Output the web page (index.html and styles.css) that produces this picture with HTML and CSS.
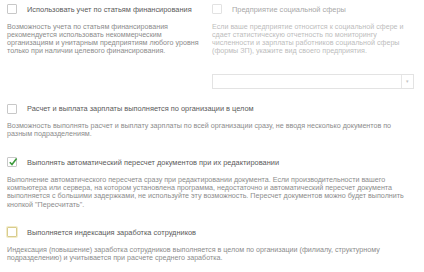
FILE: index.html
```html
<!DOCTYPE html>
<html lang="ru">
<head>
    <meta charset="UTF-8">
    <title>Настройки расчета зарплаты</title>
    <link rel="stylesheet" href="styles.css">
</head>
<body>
    <div class="page">
        <div class="columns">
            <div class="option">
                <label class="check-row">
                    <span class="box"></span>
                    <span class="label">Использовать учет по статьям финансирования</span>
                </label>
                <p class="desc">Возможность учета по статьям финансирования рекомендуется использовать некоммерческим организациям и унитарным предприятиям любого уровня только при наличии целевого финансирования.</p>
            </div>
            <div class="option disabled">
                <label class="check-row">
                    <span class="box"></span>
                    <span class="label">Предприятие социальной сферы</span>
                </label>
                <p class="desc">Если ваше предприятие относится к социальной сфере и сдает статистическую отчетность по мониторингу численности и зарплаты работников социальной сферы (формы ЗП), укажите вид своего предприятия.</p>
                <div class="select">
                    <span class="select-value"></span>
                    <span class="select-arrow">&#9662;</span>
                </div>
            </div>
        </div>

        <div class="option">
            <label class="check-row">
                <span class="box"></span>
                <span class="label">Расчет и выплата зарплаты выполняется по организации в целом</span>
            </label>
            <p class="desc">Возможность выполнять расчет и выплату зарплаты по всей организации сразу, не вводя несколько документов по разным подразделениям.</p>
        </div>

        <div class="option">
            <label class="check-row">
                <span class="box checked">
                    <svg viewBox="0 0 10 10" width="10" height="10"><path d="M1.8 5.2 L4 7.6 L8.6 1.6" fill="none" stroke="#3c9a3c" stroke-width="1.6"/></svg>
                </span>
                <span class="label">Выполнять автоматический пересчет документов при их редактировании</span>
            </label>
            <p class="desc">Выполнение автоматического пересчета сразу при редактировании документа. Если производительности вашего компьютера или сервера, на котором установлена программа, недостаточно и автоматический пересчет документа выполняется с большими задержками, не используйте эту возможность. Пересчет документов можно будет выполнить кнопкой "Пересчитать".</p>
        </div>

        <div class="option">
            <label class="check-row">
                <span class="box focused"></span>
                <span class="label">Выполняется индексация заработка сотрудников</span>
            </label>
            <p class="desc">Индексация (повышение) заработка сотрудников выполняется в целом по организации (филиалу, структурному подразделению) и учитывается при расчете среднего заработка.</p>
        </div>
    </div>
</body>
</html>
```

FILE: styles.css
```css
body {
    margin: 0;
    background-color: #ffffff;
    font-family: Arial, "Liberation Sans", sans-serif;
    color: #555555;
}
.page {
    width: 400px;
    padding: 4px 0 0 7px;
}
.columns {
    display: grid;
    grid-template-columns: 197px 202px;
    column-gap: 8px;
    margin-bottom: 15px;
}
.option {
    margin-bottom: 18.5px;
}
.columns .option {
    margin-bottom: 0;
}
.check-row {
    display: flex;
    align-items: center;
    height: 10px;
}
.box {
    box-sizing: border-box;
    width: 10px;
    height: 10px;
    border: 1px solid #c8c8c8;
    border-radius: 1px;
    background-color: #ffffff;
    flex-shrink: 0;
    position: relative;
}
.box svg {
    position: absolute;
    left: 0;
    top: -1px;
}
.box.focused {
    border-color: #d8cc8e;
    box-shadow: 0 0 0 1px #f3ecc8;
}
.label {
    margin-left: 10px;
    font-size: 7.4px;
    color: #5a5a5a;
    white-space: nowrap;
}
.desc {
    margin: 8.5px 0 0 0;
    font-size: 7.15px;
    line-height: 8.3px;
    color: #8c8c8c;
}
.disabled .box {
    border-color: #e2e2e2;
}
.disabled .label {
    color: #a8a8a8;
}
.disabled .desc {
    color: #bdbdbd;
}
.select {
    display: flex;
    height: 15px;
    margin-top: 18px;
    border: 1px solid #e3e3e3;
    box-sizing: border-box;
}
.select-value {
    flex: 1;
}
.select-arrow {
    width: 11px;
    border-left: 1px solid #e6e6e6;
    color: #c4c4c4;
    font-size: 5px;
    line-height: 13px;
    text-align: center;
}
```
